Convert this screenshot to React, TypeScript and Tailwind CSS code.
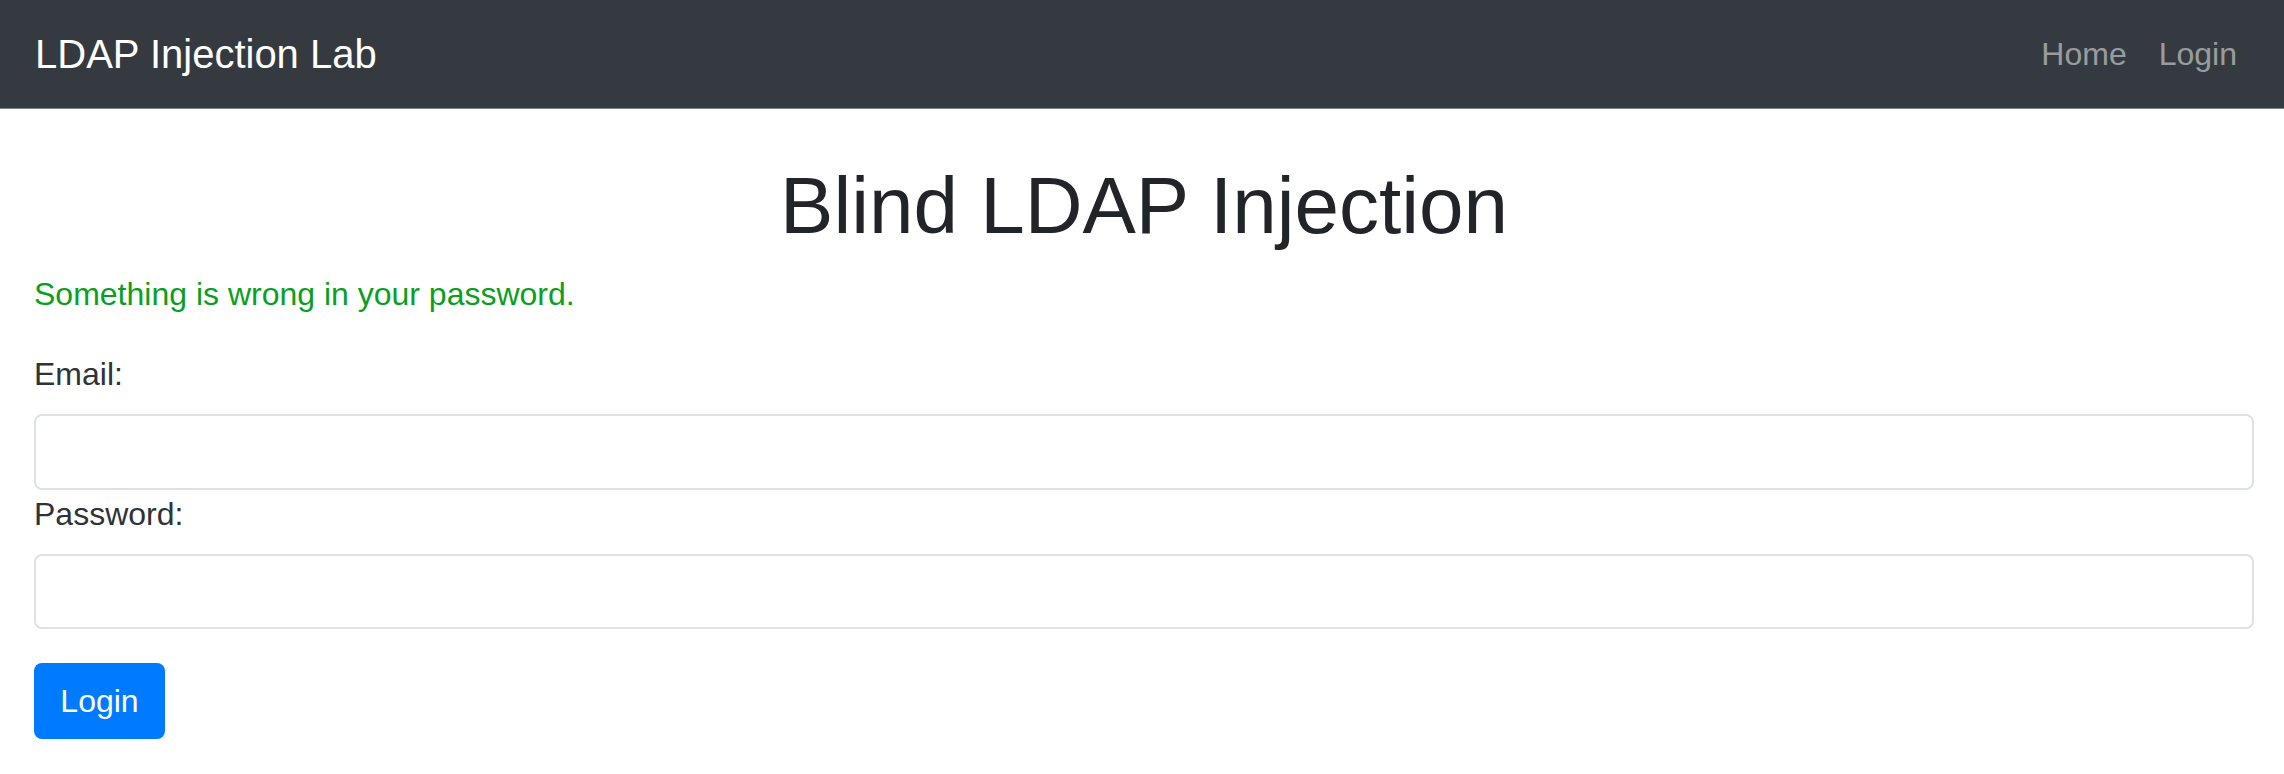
import React from 'react';

export default function App() {
  return (
    <div className="min-h-[774px] bg-white font-['Liberation_Sans',Arial,sans-serif] text-[#212529]">
      {/* Navbar */}
      <nav className="h-[109px] bg-[#343a40] border-b border-[#7d8186] flex items-center justify-between pl-[35px] pr-[31px]">
        <a href="#" className="text-[40px] leading-[60px] text-white">
          LDAP Injection Lab
        </a>
        <ul className="flex items-center">
          <li>
            <a href="#" className="block px-4 text-[32px] leading-[48px] text-[#ffffff80]">
              Home
            </a>
          </li>
          <li>
            <a href="#" className="block px-4 text-[32px] leading-[48px] text-[#ffffff80]">
              Login
            </a>
          </li>
        </ul>
      </nav>

      {/* Content */}
      <main className="pl-[34px] pr-[30px] pt-[49px]">
        <h1 className="text-center text-[80px] leading-[96px] font-medium mb-4">
          Blind LDAP Injection
        </h1>
        <p className="text-[32px] leading-[48px] text-[#0a9f1e] mb-8">
          Something is wrong in your password.
        </p>

        <form className="flex flex-col">
          <label htmlFor="email" className="text-[32px] leading-[48px] mb-4 text-[#2f3337]">
            Email:
          </label>
          <input
            id="email"
            type="email"
            className="h-[76px] w-full rounded-[8px] border-2 border-[#dee2e6] bg-white px-6 text-[32px] outline-none"
          />
          <label htmlFor="password" className="text-[32px] leading-[48px] mb-4 text-[#2f3337]">
            Password:
          </label>
          <input
            id="password"
            type="password"
            className="h-[75px] w-full rounded-[8px] border-2 border-[#dee2e6] bg-white px-6 text-[32px] outline-none"
          />
          <div className="mt-[34px]">
            <button
              type="button"
              className="h-[76px] w-[131px] rounded-[8px] bg-[#007bff] text-[32px] leading-[48px] text-white"
            >
              Login
            </button>
          </div>
        </form>
      </main>
    </div>
  );
}
